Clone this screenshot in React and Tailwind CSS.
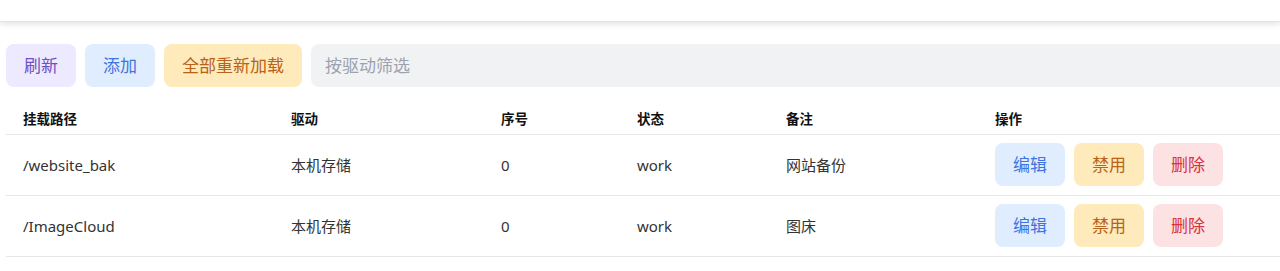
import React from "react";

const rows = [
  { path: "/website_bak", driver: "本机存储", order: "0", status: "work", remark: "网站备份" },
  { path: "/ImageCloud", driver: "本机存储", order: "0", status: "work", remark: "图床" },
];

export default function App() {
  return (
    <div
      className="w-[1280px] h-[271px] overflow-hidden bg-white"
      style={{ fontFamily: '"Noto Sans", "Noto Sans CJK SC", sans-serif' }}
    >
      <div className="h-[22px] bg-white shadow-[0_2px_6px_rgba(0,0,0,0.12)] border-b border-[#e4e4e4]" />
      <div className="pl-[6px] pt-[22px]">
        <div className="flex gap-[9px] h-[43px]">
          <button className="w-[70px] h-[43px] rounded-[8px] bg-[#ede9fe] text-[#6d4fc2] text-[17px] leading-none">
            刷新
          </button>
          <button className="w-[70px] h-[43px] rounded-[8px] bg-[#dfedff] text-[#3f74e0] text-[17px] leading-none">
            添加
          </button>
          <button className="w-[138px] h-[43px] rounded-[8px] bg-[#feeabb] text-[#b8621a] text-[17px] leading-none">
            全部重新加载
          </button>
          <input
            className="flex-1 h-[43px] rounded-l-[8px] bg-[#f1f2f4] pl-[14px] text-[17px] placeholder:text-[#9ca3af] outline-none"
            placeholder="按驱动筛选"
          />
        </div>
        <table className="mt-[17px] w-[1274px] border-collapse table-fixed">
          <colgroup>
            <col className="w-[268px]" />
            <col className="w-[210px]" />
            <col className="w-[136px]" />
            <col className="w-[149px]" />
            <col className="w-[209px]" />
            <col />
          </colgroup>
          <thead>
            <tr className="h-[30px] border-b border-[#e6e6e6]">
              {["挂载路径", "驱动", "序号", "状态", "备注", "操作"].map((h) => (
                <th key={h} className="text-left pl-[17px] pt-[1px] text-[13.5px] font-bold text-[#111] align-middle">
                  {h}
                </th>
              ))}
            </tr>
          </thead>
          <tbody>
            {rows.map((r) => (
              <tr key={r.path} className="h-[61px] border-b border-[#e6e6e6] text-[15px] text-[#333]">
                <td className="pl-[17px] pt-[2px]">{r.path}</td>
                <td className="pl-[17px] pt-[2px]">{r.driver}</td>
                <td className="pl-[17px] pt-[2px]">{r.order}</td>
                <td className="pl-[17px] pt-[2px]">{r.status}</td>
                <td className="pl-[17px] pt-[2px]">{r.remark}</td>
                <td className="pl-[17px]">
                  <div className="flex gap-[9px]">
                    <button className="w-[70px] h-[43px] rounded-[8px] bg-[#dfedff] text-[#3f74e0] text-[17px] leading-none">
                      编辑
                    </button>
                    <button className="w-[70px] h-[43px] rounded-[8px] bg-[#feeabb] text-[#b8621a] text-[17px] leading-none">
                      禁用
                    </button>
                    <button className="w-[70px] h-[43px] rounded-[8px] bg-[#fde2e4] text-[#d9343c] text-[17px] leading-none">
                      删除
                    </button>
                  </div>
                </td>
              </tr>
            ))}
          </tbody>
        </table>
      </div>
    </div>
  );
}
